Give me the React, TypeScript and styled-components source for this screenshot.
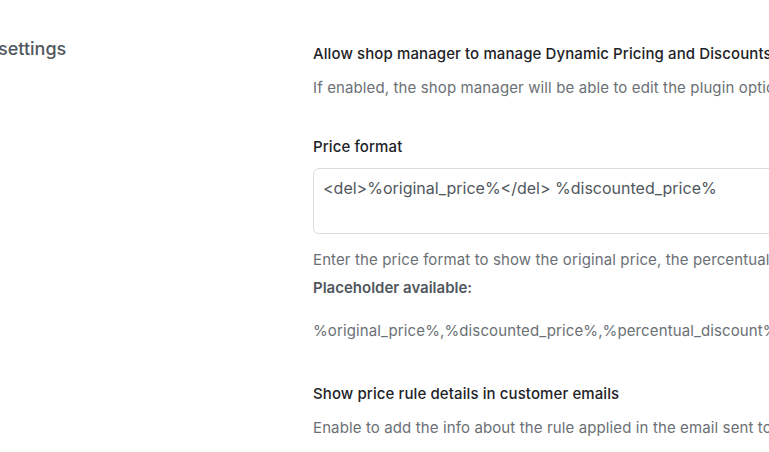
import React from "react";
import styled, { createGlobalStyle } from "styled-components";

const Global = createGlobalStyle`
  html, body { margin: 0; padding: 0; background: #ffffff; }
  body { font-family: Inter, "Noto Sans", sans-serif; -webkit-font-smoothing: antialiased; }
  * { box-sizing: border-box; }
`;

const Page = styled.div`
  width: 769px;
  height: 452px;
  overflow: hidden;
  display: grid;
  grid-template-columns: 313px 1fr;
  background: #fff;
`;

const SideCol = styled.div`
  padding-top: 37px;
  margin-left: -2px;
`;

const SectionTitle = styled.h2`
  margin: 0;
  font-size: 18px;
  line-height: 24px;
  font-weight: 500;
  color: #50575e;
  white-space: nowrap;
`;

const MainCol = styled.div`
  padding-top: 44px;
  display: flex;
  flex-direction: column;
  white-space: nowrap;
`;

const Field = styled.div<{ $gap?: number }>`
  display: flex;
  flex-direction: column;
  margin-bottom: ${(p) => p.$gap ?? 0}px;
`;

const Label = styled.div`
  font-size: 15px;
  line-height: 20px;
  font-weight: 500;
  letter-spacing: 0.1px;
  color: #1e2327;
`;

const Desc = styled.div<{ $mt?: number }>`
  margin-top: ${(p) => p.$mt ?? 0}px;
  font-size: 15px;
  line-height: 20px;
  letter-spacing: 0.12px;
  color: #6b7075;
`;

const Strong = styled.div<{ $mt?: number }>`
  margin-top: ${(p) => p.$mt ?? 0}px;
  font-size: 15px;
  line-height: 20px;
  font-weight: 600;
  color: #50575e;
`;

const TextArea = styled.textarea`
  margin-top: 11px;
  width: 520px;
  height: 66px;
  resize: none;
  border: 1px solid #dcdcde;
  border-radius: 6px;
  padding: 8px 9px;
  font-family: inherit;
  font-size: 16px;
  line-height: 22px;
  color: #50575e;
  outline: none;
  background: #fff;
  display: block;
`;

export default function App() {
  return (
    <>
      <Global />
      <Page>
        <SideCol>
          <SectionTitle>settings</SectionTitle>
        </SideCol>
        <MainCol>
          <Field $gap={39}>
            <Label>Allow shop manager to manage Dynamic Pricing and Discounts</Label>
            <Desc $mt={14}>If enabled, the shop manager will be able to edit the plugin options</Desc>
          </Field>
          <Field $gap={43}>
            <Label>Price format</Label>
            <TextArea
              readOnly
              defaultValue="<del>%original_price%</del> %discounted_price%"
            />
            <Desc $mt={16}>Enter the price format to show the original price, the percentual discount and the discounted price.</Desc>
            <Strong $mt={8}>Placeholder available:</Strong>
            <Desc $mt={23}>%original_price%,%discounted_price%,%percentual_discount%</Desc>
          </Field>
          <Field>
            <Label>Show price rule details in customer emails</Label>
            <Desc $mt={14}>Enable to add the info about the rule applied in the email sent to the customer</Desc>
          </Field>
        </MainCol>
      </Page>
    </>
  );
}
